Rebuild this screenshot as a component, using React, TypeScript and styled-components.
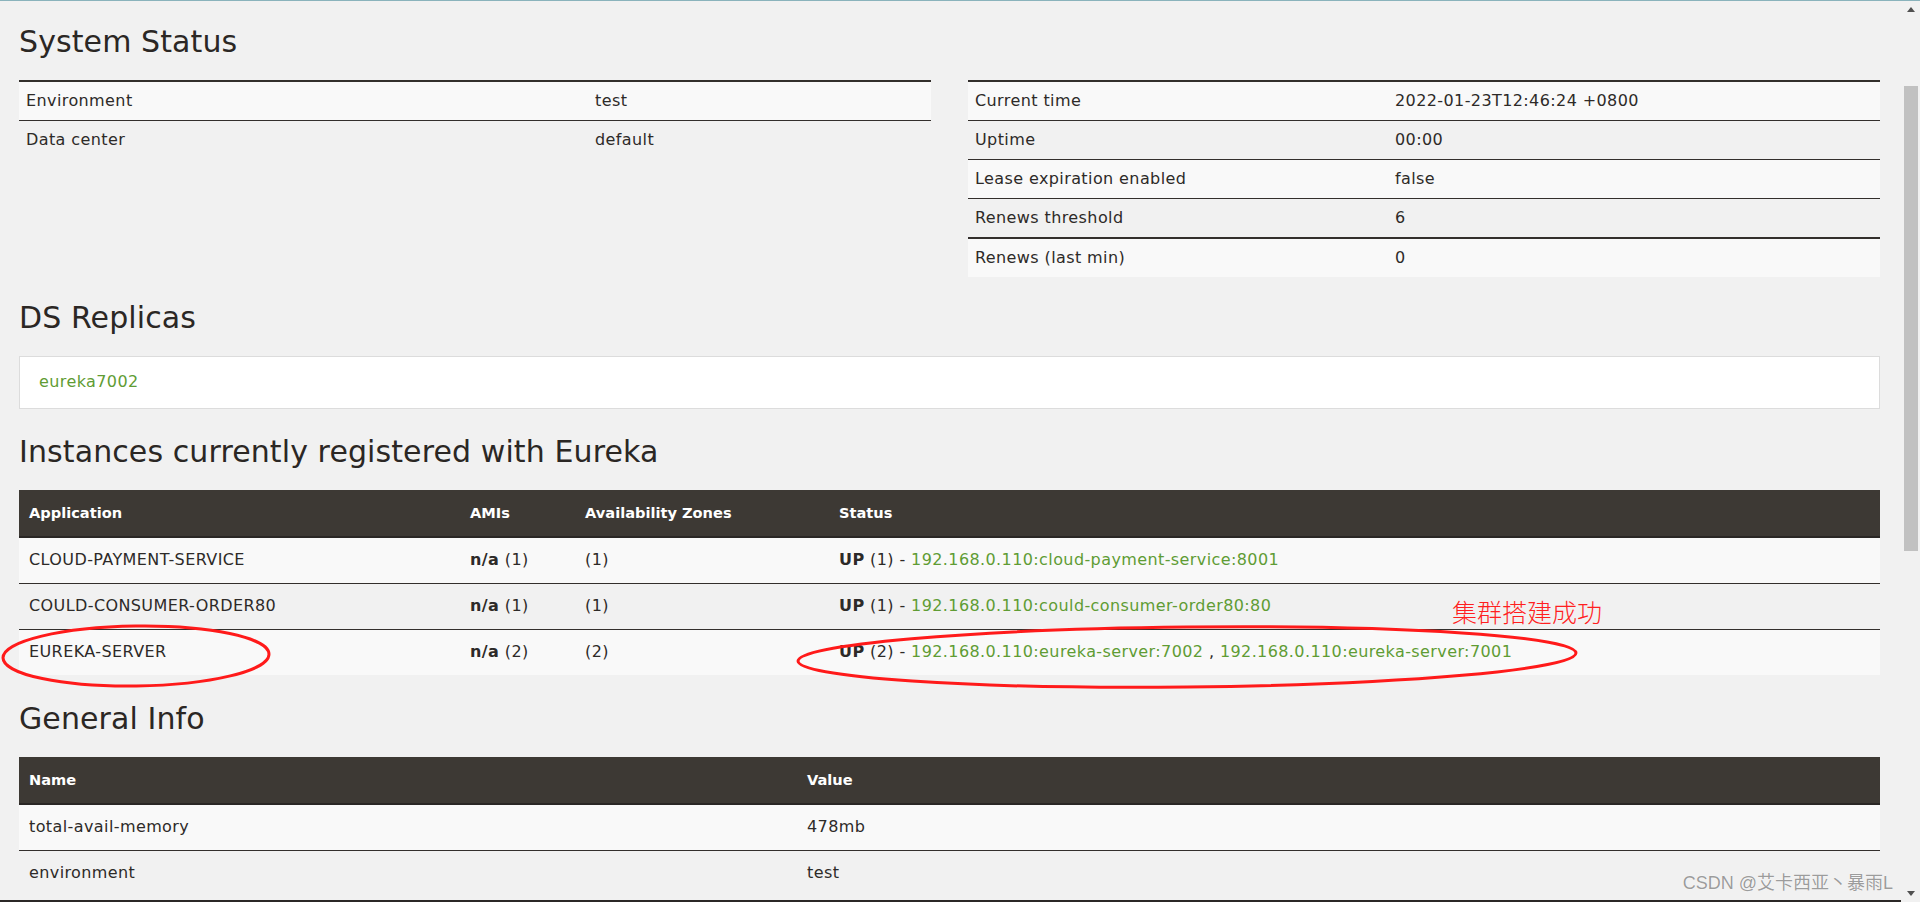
import React from "react";
import styled, { createGlobalStyle } from "styled-components";

const GlobalStyle = createGlobalStyle`
  *, *::before, *::after { box-sizing: border-box; }
  html, body { margin: 0; padding: 0; background: #f1f1f1; overflow: hidden; }
  body { font-family: "DejaVu Sans", "Noto Sans", sans-serif; color: #2d2a28; }
`;

const Viewport = styled.div`
  position: relative;
  display: flex;
  width: 1920px;
  height: 902px;
  border-top: 1px solid #8ab3bc;
  background: #f1f1f1;
  overflow: hidden;
`;

const Main = styled.main`
  flex: 1;
  min-width: 0;
  padding: 23px 21px 0 19px;
  border-bottom: 2px solid #2b2826;
  overflow: hidden;
`;

const Heading = styled.h2<{ $top?: number }>`
  margin: ${(p) => p.$top ?? 25}px 0 20px;
  font-size: 30px;
  line-height: 36px;
  font-weight: normal;
  letter-spacing: 0.1px;
  color: #2b2724;
  white-space: nowrap;
`;

const TwoCols = styled.div`
  display: grid;
  grid-template-columns: 912px 912px;
  column-gap: 37px;
  align-items: start;
`;

const KVTable = styled.table`
  width: 100%;
  table-layout: fixed;
  border-collapse: separate;
  border-spacing: 0;
  font-size: 16px;
  letter-spacing: 0.4px;
  color: #2d2a28;
`;

const KVRow = styled.tr<{ $thick?: boolean }>`
  &:nth-child(odd) { background: #f9f9f9; }
  & > td { border-top: ${(p) => (p.$thick ? 2 : 1)}px solid #332f2c; }
`;

const KVCell = styled.td<{ $w?: number }>`
  ${(p) => (p.$w ? `width: ${p.$w}px;` : "")}
  padding: 8px 7px;
  line-height: 22px;
  white-space: nowrap;
  vertical-align: middle;
`;

const Panel = styled.div`
  background: #fff;
  border: 1px solid #dcdcdc;
  padding: 14px 19px 15px;
  line-height: 22px;
  font-size: 16px;
  letter-spacing: 0.4px;
`;

const GreenLink = styled.a`
  color: #5f9c34;
  text-decoration: none;
`;

const DataTable = styled.table`
  width: 100%;
  table-layout: fixed;
  border-collapse: separate;
  border-spacing: 0;
  font-size: 16px;
  letter-spacing: 0.4px;
  color: #2d2a28;
`;

const HeadCell = styled.th<{ $w?: number }>`
  ${(p) => (p.$w ? `width: ${p.$w}px;` : "")}
  background: #3d3934;
  color: #fff;
  font-weight: bold;
  font-size: 14.6px;
  letter-spacing: 0;
  text-align: left;
  padding: 12px 10px;
  line-height: 22px;
  border-bottom: 2px solid #2a2725;
  white-space: nowrap;
`;

const BodyRow = styled.tr`
  &:nth-child(odd) { background: #f9f9f9; }
  & + & > td { border-top: 1px solid #332f2c; }
`;

const BodyCell = styled.td`
  padding: 11px 10px 12px;
  line-height: 22px;
  white-space: nowrap;
  vertical-align: middle;
`;

const Bold = styled.b`
  font-weight: 600;
`;

const Scrollbar = styled.aside`
  width: 19px;
  flex: none;
  display: flex;
  flex-direction: column;
  background: #f1f1f1;
`;

const ArrowBox = styled.div`
  height: 17px;
  display: flex;
  align-items: center;
  justify-content: center;
`;

const Arrow = styled.span<{ $down?: boolean }>`
  width: 0;
  height: 0;
  border-left: 4px solid transparent;
  border-right: 4px solid transparent;
  ${(p) =>
    p.$down
      ? "border-top: 5px solid #505050;"
      : "border-bottom: 5px solid #505050;"}
`;

const Thumb = styled.div`
  margin: 68px 2px 0 3px;
  height: 465px;
  background: #c1c1c1;
`;

const Track = styled.div`
  flex: 1;
`;

const Overlay = styled.svg`
  position: absolute;
  left: 0;
  top: 0;
  pointer-events: none;
`;

const Note = styled.div`
  position: absolute;
  left: 1452px;
  top: 594px;
  font-family: "Noto Sans CJK SC", sans-serif;
  font-size: 25px;
  font-weight: 300;
  line-height: 32px;
  color: #ff1f1f;
  white-space: nowrap;
`;

const Watermark = styled.div`
  position: absolute;
  right: 27px;
  bottom: 8px;
  font-family: "Liberation Sans", "Noto Sans CJK SC", sans-serif;
  font-size: 18px;
  line-height: 22px;
  color: #9c9c9c;
  text-shadow: 0 0 1px #fff, 0 0 1px #fff;
  white-space: nowrap;
`;

const leftRows = [
  ["Environment", "test"],
  ["Data center", "default"],
];

const rightRows = [
  ["Current time", "2022-01-23T12:46:24 +0800"],
  ["Uptime", "00:00"],
  ["Lease expiration enabled", "false"],
  ["Renews threshold", "6"],
  ["Renews (last min)", "0"],
];

const instances = [
  {
    app: "CLOUD-PAYMENT-SERVICE",
    n: 1,
    links: ["192.168.0.110:cloud-payment-service:8001"],
  },
  {
    app: "COULD-CONSUMER-ORDER80",
    n: 1,
    links: ["192.168.0.110:could-consumer-order80:80"],
  },
  {
    app: "EUREKA-SERVER",
    n: 2,
    links: ["192.168.0.110:eureka-server:7002", "192.168.0.110:eureka-server:7001"],
  },
];

const general = [
  ["total-avail-memory", "478mb"],
  ["environment", "test"],
];

export default function App() {
  return (
    <>
      <GlobalStyle />
      <Viewport>
        <Main>
          <Heading $top={0}>System Status</Heading>
          <TwoCols>
            <KVTable>
              <tbody>
                {leftRows.map(([k, v], i) => (
                  <KVRow key={k} $thick={i === 0}>
                    <KVCell $w={569}>{k}</KVCell>
                    <KVCell>{v}</KVCell>
                  </KVRow>
                ))}
              </tbody>
            </KVTable>
            <KVTable>
              <tbody>
                {rightRows.map(([k, v], i) => (
                  <KVRow key={k} $thick={i === 0 || i === 4}>
                    <KVCell $w={420}>{k}</KVCell>
                    <KVCell>{v}</KVCell>
                  </KVRow>
                ))}
              </tbody>
            </KVTable>
          </TwoCols>

          <Heading $top={23}>DS Replicas</Heading>
          <Panel>
            <GreenLink href="#">eureka7002</GreenLink>
          </Panel>

          <Heading>Instances currently registered with Eureka</Heading>
          <DataTable>
            <thead>
              <tr>
                <HeadCell $w={441}>Application</HeadCell>
                <HeadCell $w={115}>AMIs</HeadCell>
                <HeadCell $w={254}>Availability Zones</HeadCell>
                <HeadCell>Status</HeadCell>
              </tr>
            </thead>
            <tbody>
              {instances.map((r) => (
                <BodyRow key={r.app}>
                  <BodyCell>{r.app}</BodyCell>
                  <BodyCell>
                    <Bold>n/a</Bold> ({r.n})
                  </BodyCell>
                  <BodyCell>({r.n})</BodyCell>
                  <BodyCell>
                    <Bold>UP</Bold> ({r.n}) -{" "}
                    {r.links.map((l, i) => (
                      <React.Fragment key={l}>
                        {i > 0 && " , "}
                        <GreenLink href="#">{l}</GreenLink>
                      </React.Fragment>
                    ))}
                  </BodyCell>
                </BodyRow>
              ))}
            </tbody>
          </DataTable>

          <Heading $top={26}>General Info</Heading>
          <DataTable>
            <thead>
              <tr>
                <HeadCell $w={778}>Name</HeadCell>
                <HeadCell>Value</HeadCell>
              </tr>
            </thead>
            <tbody>
              {general.map(([k, v]) => (
                <BodyRow key={k}>
                  <BodyCell>{k}</BodyCell>
                  <BodyCell>{v}</BodyCell>
                </BodyRow>
              ))}
            </tbody>
          </DataTable>
        </Main>

        <Scrollbar>
          <ArrowBox>
            <Arrow />
          </ArrowBox>
          <Thumb />
          <Track />
          <ArrowBox>
            <Arrow $down />
          </ArrowBox>
        </Scrollbar>

        <Overlay width={1920} height={902} viewBox="0 0 1920 902">
          <ellipse
            cx={136}
            cy={655}
            rx={133}
            ry={30}
            fill="none"
            stroke="#ff1a1a"
            strokeWidth={3}
            transform="rotate(-0.8 136 655)"
          />
          <ellipse
            cx={1187}
            cy={656}
            rx={389}
            ry={30}
            fill="none"
            stroke="#ff1a1a"
            strokeWidth={3}
            transform="rotate(-0.6 1187 656)"
          />
        </Overlay>
        <Note>集群搭建成功</Note>
        <Watermark>CSDN @艾卡西亚丶暴雨L</Watermark>
      </Viewport>
    </>
  );
}
